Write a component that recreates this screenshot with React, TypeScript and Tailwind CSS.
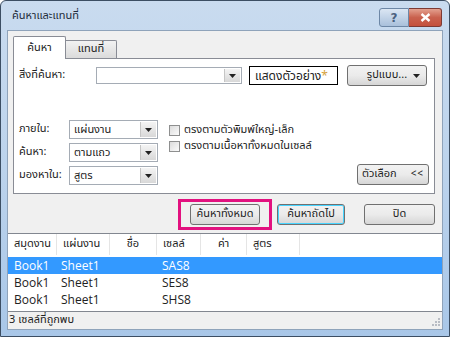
import React from 'react';

const thai = { fontFamily: 'Tahoma, "Noto Sans Thai", "Noto Sans", "DejaVu Sans", sans-serif' };

function Arrow() {
  return (
    <div className="w-[16px] h-full flex items-center justify-center border-l border-[#c5c5c5] bg-gradient-to-b from-[#f4f4f4] to-[#d8d8d8]">
      <svg width="7" height="4" viewBox="0 0 7 4"><path d="M0 0h7L3.5 4z" fill="#222" /></svg>
    </div>
  );
}

function Select({ value, w }: { value: string; w: string }) {
  return (
    <div className={`${w} h-[19px] bg-white border border-[#a5acb5] flex items-stretch`}>
      <div className="flex-1 pl-[4px] text-[11px] leading-[17px] text-[#222]">{value}</div>
      <div className="p-[1px]"><Arrow /></div>
    </div>
  );
}

function Btn({ children, className = '' }: { children: React.ReactNode; className?: string }) {
  return (
    <div className={`h-[21px] flex items-center justify-center rounded-[3px] border border-[#707070] bg-gradient-to-b from-[#f2f2f2] via-[#ebebeb] to-[#d6d6d6] text-[11px] text-[#222] ${className}`}>
      {children}
    </div>
  );
}

function Check({ label }: { label: React.ReactNode }) {
  return (
    <div className="flex items-center gap-[4px] text-[11px] text-[#222] h-[16px]">
      <div className="w-[11px] h-[11px] border border-[#8e8f8f] bg-gradient-to-br from-[#dcdcdc] to-[#fbfbfb]" />
      <span>{label}</span>
    </div>
  );
}

const cols = [
  { t: 'สมุดงาน', w: 'w-[49px]' },
  { t: 'แผ่นงาน', w: 'w-[53px]' },
  { t: 'ชื่อ', w: 'w-[47px]', c: true },
  { t: 'เซลล์', w: 'w-[44px]' },
  { t: 'ค่า', w: 'w-[46px]', c: true },
  { t: 'สูตร', w: 'w-[53px]' },
];

const rows = [
  ['Book1', 'Sheet1', 'SAS8'],
  ['Book1', 'Sheet1', 'SES8'],
  ['Book1', 'Sheet1', 'SHS8'],
];

export default function App() {
  return (
    <div className="w-[450px] h-[337px] bg-white" style={thai}>
      <div className="w-[450px] h-[337px] flex flex-col rounded-t-[6px] border border-[#3c4e63] bg-gradient-to-b from-[#c9dbef] via-[#bcd3ec] to-[#a9c7e8] px-[6px] pb-[6px]">
        <div className="h-[29px] flex items-center justify-between shrink-0">
          <span className="pl-[5px] pt-[2px] text-[11px] text-[#1e2b3a]">ค้นหาและแทนที่</span>
          <div className="flex items-center self-start mt-[7px] mr-[1px]">
            <div className="w-[30px] h-[19px] rounded-l-[3px] border border-[#6d87a6] bg-gradient-to-b from-[#dbe6f3] to-[#a9c0db] flex items-center justify-center text-[12px] font-bold text-[#4a617f]" style={{ fontFamily: '"DejaVu Sans", sans-serif' }}>?</div>
            <div className="w-[33px] h-[19px] rounded-r-[3px] border border-l-0 border-[#7d3a34] bg-gradient-to-b from-[#e3a08f] via-[#c9614e] to-[#c4503c] flex items-center justify-center">
              <svg width="11" height="9" viewBox="0 0 11 9"><path d="M1.5 1l8 7M9.5 1l-8 7" stroke="#fff" strokeWidth="2.4" /></svg>
            </div>
          </div>
        </div>

        <div className="flex-1 flex flex-col bg-[#f0f0f0] border border-[#8fa3ba]">
          <div className="pl-[5px] pr-[7px] pt-[4px]">
            <div className="flex items-end h-[23px]">
              <div className="w-[53px] h-[23px] bg-white border border-b-0 border-[#898c95] rounded-t-[2px] flex items-center justify-center text-[11px] text-[#222] relative top-[1px] z-10">ค้นหา</div>
              <div className="w-[51px] h-[18px] border border-l-0 border-b-0 border-[#898c95] rounded-tr-[2px] bg-gradient-to-b from-[#f2f2f2] to-[#dbdbdb] flex items-center justify-center text-[11px] text-[#222]">แทนที่</div>
            </div>
            <div className="h-[136px] bg-white border border-[#898c95] flex flex-col px-[5px] pt-[7px] pb-[8px]">
              <div className="flex items-center h-[19px]">
                <span className="w-[77px] text-[11px] text-[#222]">สิ่งที่ค้นหา:</span>
                <div className="w-[146px] h-[17px] border border-[#a5acb5] flex justify-end">
                  <div className="p-[1px] h-full"><Arrow /></div>
                </div>
                <div className="ml-[7px] w-[89px] h-[19px] border border-black bg-white flex items-center pl-[5px] text-[12px] text-[#222]">
                  แสดงตัวอย่าง<span className="text-[#d6a33c]">*</span>
                </div>
                <Btn className="ml-[9px] w-[80px] relative">
                  <span>รูปแบบ...</span>
                  <svg className="absolute right-[6px]" width="7" height="4" viewBox="0 0 7 4"><path d="M0 0h7L3.5 4z" fill="#222" /></svg>
                </Btn>
              </div>
              <div className="flex-1" />
              <div className="flex">
                <div className="flex flex-col gap-[4px]">
                  {[
                    ['ภายใน:', 'แผ่นงาน'],
                    ['ค้นหา:', 'ตามแถว'],
                    ['มองหาใน:', 'สูตร'],
                  ].map(([l, v]) => (
                    <div key={l} className="flex items-center">
                      <span className="w-[50px] text-[11px] text-[#222]">{l}</span>
                      <Select value={v} w="w-[89px]" />
                    </div>
                  ))}
                </div>
                <div className="ml-[11px] pt-[2px] flex flex-col">
                  <Check label="ตรงตามตัวพิมพ์ใหญ่-เล็ก" />
                  <Check label="ตรงตามเนื้อหาทั้งหมดในเซลล์" />
                </div>
                <div className="flex-1" />
                <Btn className="self-end w-[72px] h-[20px] gap-[14px]">
                  <span>ตัวเลือก</span>
                  <span className="text-[10px] tracking-[1px]">&lt;&lt;</span>
                </Btn>
              </div>
            </div>
          </div>

          <div className="flex justify-end items-center pr-[7px] mt-[4px] h-[32px]">
            <div className="border-[3px] border-[#e2117f] px-[9px] py-[2px]">
              <Btn className="w-[70px]">ค้นหาทั้งหมด</Btn>
            </div>
            <Btn className="ml-[5px] w-[68px] border-[#3c7fb1] shadow-[inset_0_0_0_1px_#48d4ff]">ค้นหาถัดไป</Btn>
            <Btn className="ml-[19px] w-[71px]">ปิด</Btn>
          </div>

          <div className="mt-[3px] h-[79px] bg-white border-t border-b border-[#828790] flex flex-col">
            <div className="flex h-[21px] items-stretch">
              {cols.map((c) => (
                <div key={c.t} className={`${c.w} border-r border-[#e5e5e5] flex items-center text-[11px] text-[#222] ${c.c ? 'justify-center' : 'pl-[6px]'}`}>
                  {c.t}
                </div>
              ))}
            </div>
            <div className="mt-[2px] flex flex-col" style={{ fontFamily: '"Open Sans", "Noto Sans", sans-serif' }}>
              {rows.map((r, i) => (
                <div key={i} className={`flex h-[17px] items-center text-[12px] ${i === 0 ? 'bg-[#3399ff] text-white' : 'text-[#222]'}`}>
                  <span className="w-[49px] pl-[6px]">{r[0]}</span>
                  <span className="w-[53px] pl-[4px]">{r[1]}</span>
                  <span className="w-[47px]" />
                  <span className="pl-[5px]">{r[2]}</span>
                </div>
              ))}
            </div>
          </div>

          <div className="flex-1 flex items-center justify-between pl-[1px] pr-[2px]">
            <span className="text-[11px] text-[#222]">3 เซลล์ที่ถูกพบ</span>
            <svg width="10" height="10" viewBox="0 0 10 10" className="self-end mb-[2px]">
              {[[8, 0], [8, 3], [5, 3], [8, 6], [5, 6], [2, 6]].map(([x, y], i) => (
                <rect key={i} x={x} y={y + 1} width="2" height="2" fill="#b8bcc4" />
              ))}
            </svg>
          </div>
        </div>
      </div>
    </div>
  );
}
